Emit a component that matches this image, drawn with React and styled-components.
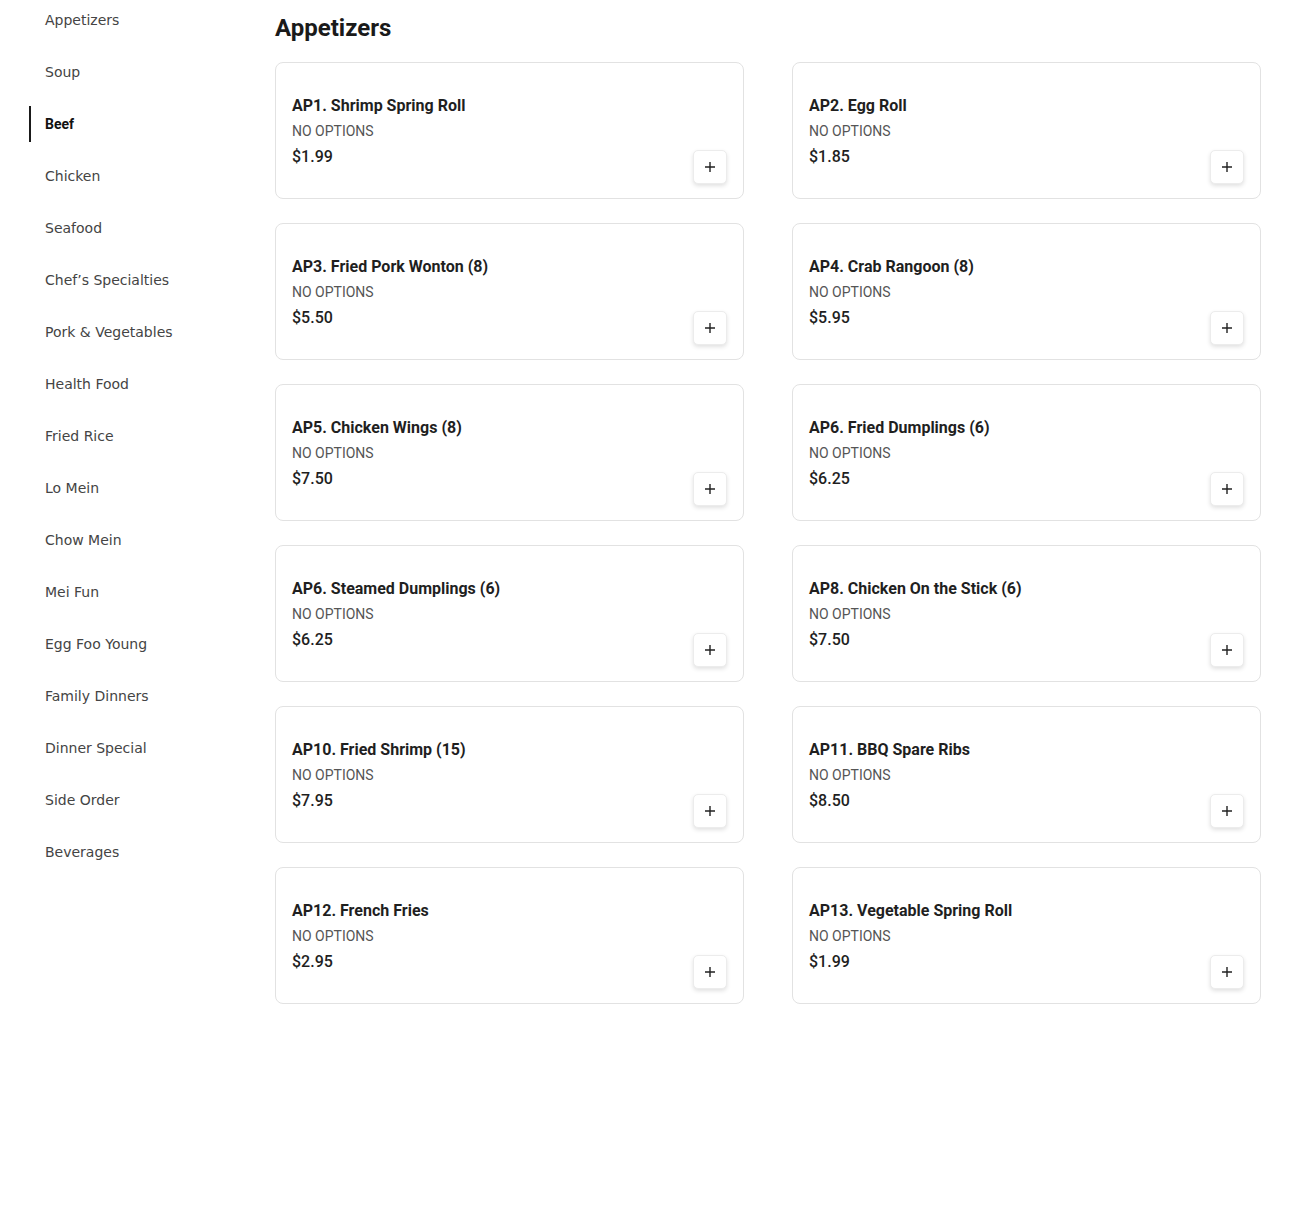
import React from "react";
import styled, { createGlobalStyle } from "styled-components";

const Global = createGlobalStyle`
  html, body { margin: 0; padding: 0; background: #fff; }
  body { font-family: Roboto, "Liberation Sans", sans-serif; color: #1a1a1a; }
  * { box-sizing: border-box; }
`;

const Page = styled.div`
  display: grid;
  grid-template-columns: 246px 1fr;
  padding: 0 29px;
  min-height: 1230px;
`;

const Sidebar = styled.nav`
  display: flex;
  flex-direction: column;
  gap: 16px;
  padding-top: 2px;
`;

const NavItem = styled.a`
  display: flex;
  align-items: center;
  height: 36px;
  padding-left: 14px;
  border-left: 2px solid ${(p) => (p.$active ? "#1a1a1a" : "transparent")};
  font-family: ${(p) => (p.$active ? 'Roboto, "Liberation Sans", sans-serif' : '"DejaVu Sans", sans-serif')};
  font-weight: ${(p) => (p.$active ? 700 : 400)};
  font-size: 14px;
  color: ${(p) => (p.$active ? "#111" : "#444")};
  text-decoration: none;
  cursor: pointer;
`;

const Main = styled.main`
  padding-top: 12px;
`;

const Heading = styled.h1`
  margin: 0 0 18px;
  font-size: 24px;
  line-height: 32px;
  font-weight: 700;
  color: #1a1a1a;
`;

const Grid = styled.div`
  display: grid;
  grid-template-columns: 1fr 1fr;
  column-gap: 48px;
  row-gap: 24px;
`;

const Card = styled.div`
  display: flex;
  justify-content: space-between;
  border: 1px solid #e2e2e2;
  border-radius: 8px;
  padding: 31px 16px 14px;
  height: 137px;
`;

const Info = styled.div`
  display: flex;
  flex-direction: column;
`;

const Title = styled.div`
  font-size: 16px;
  line-height: 24px;
  font-weight: 700;
  color: #1f1f1f;
`;

const Options = styled.div`
  font-size: 14px;
  line-height: 26px;
  color: #555;
`;

const Price = styled.div`
  font-size: 16px;
  line-height: 26px;
  font-weight: 500;
  color: #1f1f1f;
`;

const AddButton = styled.button`
  align-self: flex-end;
  width: 34px;
  height: 34px;
  display: flex;
  align-items: center;
  justify-content: center;
  padding: 0;
  background: #fff;
  border: 1px solid #ececec;
  border-radius: 5px;
  box-shadow: 0 2px 4px rgba(0, 0, 0, 0.12);
  cursor: pointer;
`;

const categories = [
  "Appetizers",
  "Soup",
  "Beef",
  "Chicken",
  "Seafood",
  "Chef\u2019s Specialties",
  "Pork & Vegetables",
  "Health Food",
  "Fried Rice",
  "Lo Mein",
  "Chow Mein",
  "Mei Fun",
  "Egg Foo Young",
  "Family Dinners",
  "Dinner Special",
  "Side Order",
  "Beverages",
];

const items = [
  ["AP1. Shrimp Spring Roll", "$1.99"],
  ["AP2. Egg Roll", "$1.85"],
  ["AP3. Fried Pork Wonton (8)", "$5.50"],
  ["AP4. Crab Rangoon (8)", "$5.95"],
  ["AP5. Chicken Wings (8)", "$7.50"],
  ["AP6. Fried Dumplings (6)", "$6.25"],
  ["AP6. Steamed Dumplings (6)", "$6.25"],
  ["AP8. Chicken On the Stick (6)", "$7.50"],
  ["AP10. Fried Shrimp (15)", "$7.95"],
  ["AP11. BBQ Spare Ribs", "$8.50"],
  ["AP12. French Fries", "$2.95"],
  ["AP13. Vegetable Spring Roll", "$1.99"],
];

const Plus = () => (
  <svg width="12" height="12" viewBox="0 0 12 12" fill="none">
    <path d="M6 1v10M1 6h10" stroke="#222" strokeWidth="1.4" />
  </svg>
);

export default function App() {
  return (
    <>
      <Global />
      <Page>
        <Sidebar>
          {categories.map((c) => (
            <NavItem key={c} $active={c === "Beef"}>
              {c}
            </NavItem>
          ))}
        </Sidebar>
        <Main>
          <Heading>Appetizers</Heading>
          <Grid>
            {items.map(([name, price], i) => (
              <Card key={i}>
                <Info>
                  <Title>{name}</Title>
                  <Options>NO OPTIONS</Options>
                  <Price>{price}</Price>
                </Info>
                <AddButton aria-label="Add">
                  <Plus />
                </AddButton>
              </Card>
            ))}
          </Grid>
        </Main>
      </Page>
    </>
  );
}
